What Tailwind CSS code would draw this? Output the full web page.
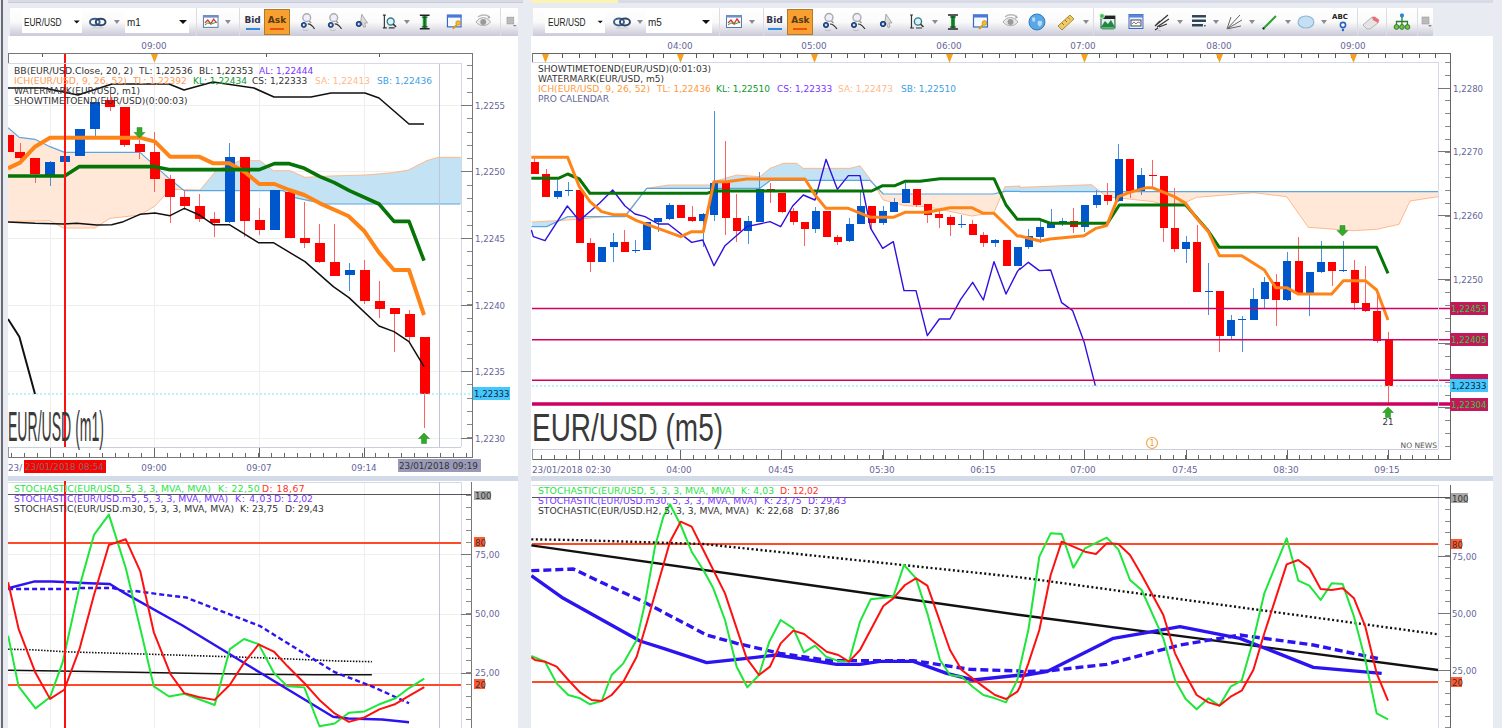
<!DOCTYPE html>
<html lang="en">
<head>
<meta charset="UTF-8">
<title>EUR/USD charts</title>
<script src="https://cdn.jsdelivr.net/npm/@tailwindcss/browser@4"></script>
</head>
<body class="bg-[#e9ebf3]">
<!-- toolbar icons -->
<svg class="hidden">
  <symbol id="i-link" viewBox="0 0 20 20"><ellipse cx="7" cy="10" rx="5" ry="3.4" fill="none" stroke="#3c5f8c" stroke-width="2"/><ellipse cx="13" cy="10" rx="5" ry="3.4" fill="none" stroke="#2c4468" stroke-width="2"/><path d="M4 16h12" stroke="#ccc" stroke-width="1"/></symbol>
  <symbol id="i-chart" viewBox="0 0 20 20"><rect x="2.5" y="3.5" width="15" height="12" fill="#fff" stroke="#5577aa"/><rect x="2" y="3" width="16" height="2.5" fill="#6f8fc6"/><path d="M4 11l3-3 3 4 3-5 3 4" fill="none" stroke="#e03030" stroke-width="1.3"/><path d="M4 13l3-2 4 1 5-2" fill="none" stroke="#2e9e35" stroke-width="1"/><path d="M4 18h12" stroke="#ddd"/></symbol>
  <symbol id="i-zoomin" viewBox="0 0 20 20"><circle cx="9" cy="5.5" r="4" fill="#eef" stroke="#aaa" stroke-width="1.4"/><path d="M11.5 9l2 2" stroke="#999" stroke-width="1.6"/><circle cx="6" cy="13" r="2.6" fill="#2a62c8" stroke="#123" stroke-width=".8"/><circle cx="6" cy="13" r="1" fill="#fff"/><path d="M10 12c3 0 5 2 7 5" fill="none" stroke="#333" stroke-width="1.2"/><path d="M5 18c2 1 4 1 6 0" stroke="#bbb" fill="none"/></symbol>
  <symbol id="i-cursor" viewBox="0 0 20 20"><path d="M10 2l6 9-3 0 1 4-2 .5-1.500-4-2 2z" fill="#ddd" stroke="#999" stroke-width=".8"/><circle cx="7" cy="12" r="2.700" fill="#2a62c8" stroke="#123" stroke-width=".8"/><circle cx="7" cy="12" r="1" fill="#fff"/></symbol>
  <symbol id="i-zoomrect" viewBox="0 0 20 20"><path d="M3 3h3M4.500 3v13M3 16h4M9 16h6" stroke="#333" stroke-width="1.200" fill="none"/><circle cx="11" cy="9.500" r="3.600" fill="#dff1f5" stroke="#2f7f8f" stroke-width="1.400"/><path d="M13.500 12l3 3" stroke="#333" stroke-width="1.600"/></symbol>
  <symbol id="i-height" viewBox="0 0 20 20"><path d="M5 3h10M5 17h10" stroke="#222" stroke-width="1.600"/><rect x="8" y="4" width="4" height="12" fill="#1f9b3c"/><path d="M10 4v12" stroke="#0a5a1e"/><path d="M7 5h6M7 15h6" stroke="#0a4a18"/></symbol>
  <symbol id="i-winkey" viewBox="0 0 20 20"><rect x="2.500" y="3" width="14" height="12" fill="#f6f9ff" stroke="#3a66c8" stroke-width="1.200"/><rect x="2" y="2.500" width="15" height="3" fill="#4878d8"/><circle cx="13.500" cy="11" r="2.400" fill="#f4c020" stroke="#b08010" stroke-width=".6"/><path d="M12 13l-4 4" stroke="#d8a010" stroke-width="2"/></symbol>
  <symbol id="i-eye" viewBox="0 0 20 20"><path d="M2 10c4-6 11-6 15 0-4 5-11 5-15 0z" fill="#e8e8e8" stroke="#aaa"/><circle cx="9.500" cy="10" r="3" fill="#9a9a9a"/><path d="M4 5c3-3 9-3 12 0" stroke="#bbb" stroke-width="1.400" fill="none"/><path d="M15 3l2 3-3 .5z" fill="#aaa"/></symbol>
  <symbol id="i-globe" viewBox="0 0 20 20"><circle cx="10" cy="10" r="8" fill="#58a8e8" stroke="#2e78c0"/><path d="M5 6c3-2 4 1 3 3s-3 1-3-3zM11 9c3-1 5 0 4 3s-3 3-4 1 0-3 0-4z" fill="#b9dcf0"/></symbol>
  <symbol id="i-ruler" viewBox="0 0 20 20"><path d="M2 14L14 3l4 4L6 18z" fill="#edcb6a" stroke="#b08a2a"/><path d="M6 11l2 2M9 8l2 2M12 5.500l2 2" stroke="#94701f"/></symbol>
  <symbol id="i-image" viewBox="0 0 20 20"><rect x="3" y="4" width="14" height="12" fill="#dff0f8" stroke="#1a5a30"/><rect x="3" y="4" width="14" height="3" fill="#222"/><path d="M3 15l4-6 3 3 3-4 4 7z" fill="#1f8a3a"/><circle cx="4" cy="4" r="2.500" fill="#3cc050" stroke="#fff" stroke-width=".8"/><path d="M4 17h12" stroke="#2f9f50"/></symbol>
  <symbol id="i-picwin" viewBox="0 0 20 20"><rect x="3" y="2.500" width="14" height="14" fill="#eaf1fb" stroke="#3a66c8"/><rect x="3" y="2.500" width="14" height="3" fill="#5a86d8"/><rect x="5" y="8" width="10" height="6" fill="#fff" stroke="#445"/><path d="M6 12l2-2 2 2 2-2 2 1" stroke="#555" fill="none" stroke-width=".8"/></symbol>
  <symbol id="i-fork" viewBox="0 0 20 20"><path d="M3 14L16 3M5 15L17 7M7 15l8-3M3 14l5-5M6 16l-3 2" stroke="#333" stroke-width="1.200" fill="none"/><path d="M6 18l3 1" stroke="#bbb"/></symbol>
  <symbol id="i-lines" viewBox="0 0 20 20"><rect x="3" y="3" width="14" height="2.500" fill="#2e4558"/><rect x="3" y="7.500" width="14" height="2.500" fill="#2e4558"/><rect x="3" y="12" width="11" height="2.500" fill="#2e4558"/><path d="M15 13l2 0-1 2z" fill="#2e4558"/></symbol>
  <symbol id="i-fan" viewBox="0 0 20 20"><path d="M3 17L16 3M3 17L18 8M3 17l14-3M3 17l4-12" stroke="#666" stroke-width="1" fill="none"/><path d="M3 17l5 2" stroke="#ccc"/></symbol>
  <symbol id="i-line" viewBox="0 0 20 20"><path d="M3 17L16 4" stroke="#2f9e36" stroke-width="2"/><path d="M3 17l1-1" stroke="#123" stroke-width="2.400"/></symbol>
  <symbol id="i-ellipse" viewBox="0 0 20 20"><ellipse cx="10" cy="10" rx="8" ry="6" fill="#c5dff3" stroke="#8fb7d8" stroke-width="1.200"/></symbol>
  <symbol id="i-abc" viewBox="0 0 20 20"><text x="10" y="7" text-anchor="middle" class="fill-[#222] text-[7px] font-bold">ABC</text><circle cx="13" cy="13" r="2.600" fill="#fff" stroke="#2a62c8" stroke-width="1.600"/><circle cx="13" cy="18" r="1.200" fill="#2a62c8"/></symbol>
  <symbol id="i-eraser" viewBox="0 0 20 20"><path d="M2 13l9-8 3 0 4 3-1 3-8 6H6z" fill="#e4e4e4" stroke="#b5b5b5"/><path d="M11 5l3 0 4 3-1 3-5-3z" fill="#f56a72"/></symbol>
  <symbol id="i-tree" viewBox="0 0 20 20"><rect x="8" y="1.500" width="4" height="4" rx="1.500" fill="#2a88e0"/><path d="M10 5v4M4.500 13V9.500h11V13M10 9v4" stroke="#2a7d34" stroke-width="1.300" fill="none"/><circle cx="4.500" cy="15" r="2.400" fill="#7cbe3c" stroke="#2a7d34"/><circle cx="10" cy="15" r="2.400" fill="#7cbe3c" stroke="#2a7d34"/><circle cx="15.500" cy="15" r="2.400" fill="#7cbe3c" stroke="#2a7d34"/></symbol>
  <symbol id="i-grip" viewBox="0 0 12 12"><rect x="1" y="1" width="7" height="7" fill="#bbb" stroke="#999" stroke-width=".6"/><path d="M7 9h4l-2 2z" fill="#888"/></symbol>
  <symbol id="i-drop" viewBox="0 0 8 8"><path d="M1 2h6L4 6z" fill="#8a8a96"/></symbol>
  <symbol id="i-combo" viewBox="0 0 10 8"><path d="M1 2h8L5 6z" fill="#111"/></symbol>
</svg>

<div class="relative flex w-[1502px] h-[728px] overflow-hidden bg-[#e9ebf3] font-['DejaVu_Sans',sans-serif]">
  <div class="w-[2px] h-full bg-[#6a6a72] ml-[1px]"></div>

  <!-- left pane -->
  <div class="flex flex-col w-[515px] ml-[5px]">
    <div class="h-[3px] w-full bg-[#d8dbe6] border-b border-[#c9ccd8]"></div>
    <div class="h-[5px]"></div>
    <div class="flex h-[28px] w-[508px] ml-[2px] items-center bg-gradient-to-b from-[#ffffff] via-[#fafafa] to-[#c9c9d8] text-[10px] text-[#222]">
      <div class="w-[12px]"></div>
      <div class="flex items-center w-[60px] h-[22px] bg-white pl-[2px]"><span class="inline-block origin-left scale-x-[0.76] text-[11px] font-['Liberation_Sans',sans-serif]">EUR/USD</span><svg class="w-[10px] h-[8px] ml-auto mr-[1px]"><use href="#i-combo"/></svg></div>
      <svg class="w-[20px] h-[20px] ml-[6px] mr-[6px]"><use href="#i-link"/></svg>
      <svg class="w-[8px] h-[8px] mr-[2px]"><use href="#i-drop"/></svg>
      <div class="flex items-center w-[66px] h-[22px] bg-white ml-[2px] pl-[2px]"><span class="inline-block origin-left scale-x-[0.9] text-[11px] font-['Liberation_Sans',sans-serif]">m1</span><svg class="w-[10px] h-[8px] ml-auto mr-[1px]"><use href="#i-combo"/></svg></div>
      <div class="w-[8px] h-full border-r border-[#dcdce4]"></div>
      <svg class="w-[20px] h-[20px] mx-[4px]"><use href="#i-chart"/></svg>
      <svg class="w-[8px] h-[8px]"><use href="#i-drop"/></svg>
      <div class="w-[8px] h-full border-r border-[#dcdce4]"></div>
      <div class="flex flex-col items-center w-[20px] ml-[3px] text-[9px] font-semibold text-[#33334a]">Bid<div class="w-[14px] h-[2px] bg-[#2f8be0]"></div></div>
      <div class="flex flex-col items-center justify-center w-[26px] h-[26px] ml-[2px] bg-[#f8a030] border border-[#b07a28] text-[9px] font-semibold text-[#5a3a10]">Ask<div class="w-[14px] h-[2px] bg-[#e8540f]"></div></div>
      <div class="w-[4px]"></div>
      <svg class="w-[20px] h-[20px] mx-[4px]"><use href="#i-zoomin"/></svg>
      <svg class="w-[20px] h-[20px] mx-[4px]"><use href="#i-zoomin"/></svg>
      <svg class="w-[20px] h-[20px] mx-[4px]"><use href="#i-cursor"/></svg>
      <svg class="w-[20px] h-[20px] mx-[4px]"><use href="#i-zoomrect"/></svg>
      <svg class="w-[8px] h-[8px]"><use href="#i-drop"/></svg>
      <svg class="w-[20px] h-[20px] mx-[4px]"><use href="#i-height"/></svg>
      <svg class="w-[20px] h-[20px] ml-[6px] mr-[4px]"><use href="#i-winkey"/></svg>
      <svg class="w-[20px] h-[20px] ml-[6px] mr-[4px]"><use href="#i-eye"/></svg>
      <div class="w-[4px] h-full border-r border-[#dcdce4]"></div>
      <svg class="w-[12px] h-[12px] ml-[5px]"><use href="#i-grip"/></svg>
    </div>

    <div class="h-[440px] w-[510px] bg-white">
      <svg viewBox="8 36 510 440" class="w-[510px] h-[440px] text-[9px]">
        <g id="lt-marks"></g>
        <text x="154" y="49" text-anchor="middle" class="fill-[#666699] text-[8.8px]">09:00</text>
        <g class="fill-[#333]"><text x="14" y="74" textLength="119" lengthAdjust="spacingAndGlyphs">BB(EUR/USD.Close, 20, 2)</text><text x="139" y="74">TL: 1,22536</text><text x="199" y="74">BL: 1,22353</text></g>
        <text x="259" y="74" class="fill-[#7a33ff]">AL: 1,22444</text>
        <g class="fill-[#ff9a55]"><text x="14" y="84" textLength="113" lengthAdjust="spacingAndGlyphs">ICH(EUR/USD, 9, 26, 52)</text><text x="133" y="84">TL: 1,22392</text></g>
        <text x="193" y="84" class="fill-[#0a9a2a]">KL: 1,22434</text>
        <text x="252" y="84" class="fill-[#333]">CS: 1,22333</text>
        <text x="315" y="84" class="fill-[#ffb98a]">SA: 1,22413</text>
        <text x="377" y="84" class="fill-[#3ca0e6]">SB: 1,22436</text>
        <text x="14" y="94" textLength="126" lengthAdjust="spacingAndGlyphs" class="fill-[#333]">WATERMARK(EUR/USD, m1)</text>
        <text x="14" y="104" textLength="173.500" lengthAdjust="spacingAndGlyphs" class="fill-[#333]">SHOWTIMETOEND(EUR/USD)(0:00:03)</text>
        <text x="8" y="441" textLength="96" lengthAdjust="spacingAndGlyphs" class="fill-[#3a3a3a] text-[42px] font-['Liberation_Sans',sans-serif]">EUR/USD (m1)</text>
        <g class="fill-[#666699] text-[8.6px]">
          <text x="475" y="109">1,2255</text><text x="475" y="175">1,2250</text><text x="475" y="242">1,2245</text><text x="475" y="309">1,2240</text><text x="475" y="375">1,2235</text><text x="475" y="442">1,2230</text>
        </g>
        <rect x="473" y="387" width="37" height="13" fill="#40c8ff"/>
        <text x="474" y="397" class="fill-[#223] text-[8.6px]">1,22333</text>
        <g class="text-[8.8px]">
          <text x="8" y="471" class="fill-[#666699]">23/</text>
          <rect x="24" y="460" width="82" height="13" fill="#ff0000"/>
          <text x="25" y="470" class="fill-[#707070]">23/01/2018 08:54</text>
          <text x="154" y="471" text-anchor="middle" class="fill-[#666699]">09:00</text>
          <text x="259" y="471" text-anchor="middle" class="fill-[#666699]">09:07</text>
          <text x="364" y="471" text-anchor="middle" class="fill-[#666699]">09:14</text>
          <rect x="398" y="459" width="83" height="13" fill="#9a9ab8"/>
          <text x="399" y="469" class="fill-[#333]">23/01/2018 09:19</text>
        </g>
      </svg>
    </div>
    <div class="h-[5px] w-[510px] bg-[#d3dbe8]"></div>
    <div class="flex-1 w-[510px] bg-white">
      <svg viewBox="8 481 510 247" class="w-[510px] h-[247px] text-[9.2px]">
        <g id="lb-marks"></g>
        <text x="14" y="492" textLength="197" lengthAdjust="spacingAndGlyphs" class="fill-[#1fe53f]">STOCHASTIC(EUR/USD, 5, 3, 3, MVA, MVA)</text>
        <text x="218" y="492" textLength="41.600" class="fill-[#1fe53f]">K: 22,50</text>
        <text x="262" y="492" textLength="42.600" class="fill-[#ff3020]">D: 18,67</text>
        <g class="fill-[#7a33ff]"><text x="14" y="502" textLength="214" lengthAdjust="spacingAndGlyphs">STOCHASTIC(EUR/USD.m5, 5, 3, 3, MVA, MVA)</text><text x="235" y="502" textLength="36.800">K: 4,03</text><text x="274" y="502" textLength="38.900">D: 12,02</text></g>
        <g class="fill-[#333]"><text x="14" y="512" textLength="220" lengthAdjust="spacingAndGlyphs">STOCHASTIC(EUR/USD.m30, 5, 3, 3, MVA, MVA)</text><text x="240" y="512" textLength="38.200">K: 23,75</text><text x="285" y="512" textLength="38.900">D: 29,43</text></g>
        <g class="text-[8.6px]">
          <rect x="474" y="491" width="17" height="9" fill="#a8a8a8"/><text x="475" y="499" class="fill-[#333]">100</text>
          <rect x="474" y="537" width="11" height="10" fill="#ff5a30"/><text x="475" y="546" class="fill-[#333]">80</text>
          <rect x="474" y="679" width="11" height="10" fill="#ff5a30"/><text x="475" y="688" class="fill-[#333]">20</text>
          <g class="fill-[#666699]"><text x="475" y="558">75,00</text><text x="475" y="617">50,00</text><text x="475" y="676">25,00</text></g>
        </g>
      </svg>
    </div>
  </div>

  <div class="w-[5px]"></div>

  <!-- right pane -->
  <div class="flex flex-col w-[962px] ml-[3px]">
    <div class="flex h-[3px]"><div class="w-[87px] bg-[#fbf3b4]"></div><div class="flex-1 bg-[#d8dbe6]"></div></div>
    <div class="h-[5px]"></div>
    <div class="flex h-[28px] w-[900px] ml-[2px] items-center bg-gradient-to-b from-[#ffffff] via-[#fafafa] to-[#c9c9d8] text-[10px] text-[#222]">
      <div class="w-[12px]"></div>
      <div class="flex items-center w-[60px] h-[22px] bg-white pl-[3px]"><span class="inline-block origin-left scale-x-[0.76] text-[11px] font-['Liberation_Sans',sans-serif]">EUR/USD</span><svg class="w-[10px] h-[8px] ml-auto mr-[1px]"><use href="#i-combo"/></svg></div>
      <svg class="w-[20px] h-[20px] ml-[7px] mr-[4px]"><use href="#i-link"/></svg>
      <svg class="w-[8px] h-[8px] mr-[2px]"><use href="#i-drop"/></svg>
      <div class="flex items-center w-[66px] h-[22px] bg-white pl-[2px]"><span class="inline-block origin-left scale-x-[0.9] text-[11px] font-['Liberation_Sans',sans-serif]">m5</span><svg class="w-[10px] h-[8px] ml-auto mr-[1px]"><use href="#i-combo"/></svg></div>
      <div class="w-[8px] h-full border-r border-[#dcdce4]"></div>
      <svg class="w-[20px] h-[20px] mx-[4px]"><use href="#i-chart"/></svg>
      <svg class="w-[8px] h-[8px]"><use href="#i-drop"/></svg>
      <div class="w-[8px] h-full border-r border-[#dcdce4]"></div>
      <div class="flex flex-col items-center w-[20px] ml-[1px] text-[9px] font-semibold text-[#33334a]">Bid<div class="w-[14px] h-[2px] bg-[#2f8be0]"></div></div>
      <div class="flex flex-col items-center justify-center w-[26px] h-[26px] ml-[3px] bg-[#f8a030] border border-[#b07a28] text-[9px] font-semibold text-[#5a3a10]">Ask<div class="w-[14px] h-[2px] bg-[#e8540f]"></div></div>
      <div class="w-[3px]"></div>
      <svg class="w-[20px] h-[20px] mx-[4px]"><use href="#i-zoomin"/></svg>
      <svg class="w-[20px] h-[20px] mx-[4px]"><use href="#i-zoomin"/></svg>
      <svg class="w-[20px] h-[20px] mx-[4px]"><use href="#i-cursor"/></svg>
      <svg class="w-[20px] h-[20px] ml-[7px] mr-[4px]"><use href="#i-zoomrect"/></svg>
      <svg class="w-[8px] h-[8px]"><use href="#i-drop"/></svg>
      <svg class="w-[20px] h-[20px] mx-[4px]"><use href="#i-height"/></svg>
      <svg class="w-[20px] h-[20px] mx-[4px]"><use href="#i-winkey"/></svg>
      <svg class="w-[20px] h-[20px] ml-[6px] mr-[4px]"><use href="#i-eye"/></svg>
      <svg class="w-[20px] h-[20px] ml-[2px] mr-[5px]"><use href="#i-globe"/></svg>
      <svg class="w-[20px] h-[20px] mx-[4px]"><use href="#i-ruler"/></svg>
      <svg class="w-[8px] h-[8px] ml-[2px]"><use href="#i-drop"/></svg>
      <div class="w-[4px] h-full border-r border-[#dcdce4]"></div>
      <svg class="w-[20px] h-[20px] mx-[4px]"><use href="#i-image"/></svg>
      <svg class="w-[20px] h-[20px] mx-[4px]"><use href="#i-picwin"/></svg>
      <svg class="w-[20px] h-[20px] ml-[2px] mr-[4px]"><use href="#i-fork"/></svg>
      <svg class="w-[8px] h-[8px]"><use href="#i-drop"/></svg>
      <svg class="w-[20px] h-[20px] ml-[5px] mr-[4px]"><use href="#i-lines"/></svg>
      <svg class="w-[8px] h-[8px]"><use href="#i-drop"/></svg>
      <svg class="w-[20px] h-[20px] mx-[4px]"><use href="#i-fan"/></svg>
      <svg class="w-[8px] h-[8px]"><use href="#i-drop"/></svg>
      <svg class="w-[20px] h-[20px] mx-[4px]"><use href="#i-line"/></svg>
      <svg class="w-[8px] h-[8px]"><use href="#i-drop"/></svg>
      <svg class="w-[20px] h-[20px] mx-[4px]"><use href="#i-ellipse"/></svg>
      <svg class="w-[8px] h-[8px]"><use href="#i-drop"/></svg>
      <svg class="w-[20px] h-[20px] ml-[2px] mr-[4px]"><use href="#i-abc"/></svg>
      <div class="w-[4px] h-full border-r border-[#dcdce4]"></div>
      <svg class="w-[20px] h-[20px] ml-[3px] mr-[4px]"><use href="#i-eraser"/></svg>
      <div class="w-[2px] h-full border-r border-[#dcdce4]"></div>
      <svg class="w-[20px] h-[20px] ml-[5px] mr-[4px]"><use href="#i-tree"/></svg>
      <div class="w-[2px] h-full border-r border-[#dcdce4]"></div>
      <svg class="w-[12px] h-[12px] ml-[3px]"><use href="#i-grip"/></svg>
    </div>

    <div class="h-[440px] bg-white">
      <svg viewBox="531 36 962 440" class="w-[962px] h-[440px] text-[9px]">
        <g id="rt-marks"></g>
        <g class="fill-[#666699] text-[8.8px]" text-anchor="middle">
          <text x="680" y="49">04:00</text><text x="814" y="49">05:00</text><text x="949" y="49">06:00</text><text x="1083" y="49">07:00</text><text x="1219" y="49">08:00</text><text x="1353" y="49">09:00</text>
        </g>
        <text x="538" y="72" textLength="173" lengthAdjust="spacingAndGlyphs" class="fill-[#333]">SHOWTIMETOEND(EUR/USD)(0:01:03)</text>
        <text x="538" y="82" textLength="126" lengthAdjust="spacingAndGlyphs" class="fill-[#333]">WATERMARK(EUR/USD, m5)</text>
        <g class="fill-[#ff9a3a]"><text x="538" y="92" textLength="112" lengthAdjust="spacingAndGlyphs">ICH(EUR/USD, 9, 26, 52)</text><text x="657" y="92">TL: 1,22436</text></g>
        <text x="716" y="92" class="fill-[#0a9a2a]">KL: 1,22510</text>
        <text x="777" y="92" class="fill-[#7a33ff]">CS: 1,22333</text>
        <text x="838" y="92" class="fill-[#ffb98a]">SA: 1,22473</text>
        <text x="901" y="92" class="fill-[#3ca0e6]">SB: 1,22510</text>
        <text x="538" y="102" textLength="71" lengthAdjust="spacingAndGlyphs" class="fill-[#666699]">PRO CALENDAR</text>
        <text x="532" y="441" textLength="191" lengthAdjust="spacingAndGlyphs" class="fill-[#3a3a3a] text-[39px] font-['Liberation_Sans',sans-serif]">EUR/USD (m5)</text>
        <g class="fill-[#666699] text-[8.6px]"><text x="1453" y="92">1,2280</text><text x="1453" y="155">1,2270</text><text x="1453" y="219">1,2260</text><text x="1453" y="283">1,2250</text></g>
        <g class="text-[8.6px]">
          <rect x="1450" y="302" width="38" height="13" fill="#c4175c"/><text x="1451" y="312" class="fill-[#22d040]">1,22453</text>
          <rect x="1450" y="333" width="38" height="13" fill="#c4175c"/><text x="1451" y="343" class="fill-[#22d040]">1,22405</text>
          <rect x="1450" y="374" width="38" height="6" fill="#c4175c"/>
          <rect x="1450" y="379" width="38" height="13" fill="#40c8ff"/><text x="1451" y="389" class="fill-[#223]">1,22333</text>
          <rect x="1450" y="398" width="38" height="13" fill="#c4175c"/><text x="1451" y="408" class="fill-[#22d040]">1,22304</text>
        </g>
        <text x="1388" y="425" text-anchor="middle" class="fill-[#333] text-[8.6px]">21</text>
        <circle cx="1152" cy="443" r="5.500" fill="none" stroke="#f5a64a" stroke-width="1.200"/>
        <text x="1152" y="446" text-anchor="middle" class="fill-[#f59a3a] text-[8px]">1</text>
        <text x="1437" y="448" text-anchor="end" class="fill-[#555] text-[7.5px]">NO NEWS</text>
        <g class="fill-[#666699] text-[8.8px]">
          <text x="532" y="473">23/01/2018 02:30</text>
          <g text-anchor="middle"><text x="679" y="473">04:00</text><text x="781" y="473">04:45</text><text x="882" y="473">05:30</text><text x="983" y="473">06:15</text><text x="1083" y="473">07:00</text><text x="1185" y="473">07:45</text><text x="1286" y="473">08:30</text><text x="1387" y="473">09:15</text></g>
        </g>
      </svg>
    </div>
    <div class="h-[5px] w-[962px] bg-[#d3dbe8]"></div>
    <div class="flex-1 bg-white">
      <svg viewBox="531 481 962 247" class="w-[962px] h-[247px] text-[9.2px]">
        <g id="rb-marks"></g>
        <text x="538" y="494" textLength="197" lengthAdjust="spacingAndGlyphs" class="fill-[#1fe53f]">STOCHASTIC(EUR/USD, 5, 3, 3, MVA, MVA)</text>
        <text x="741" y="494" textLength="33" class="fill-[#1fe53f]">K: 4,03</text>
        <text x="780" y="494" textLength="38.700" class="fill-[#ff3020]">D: 12,02</text>
        <g class="fill-[#7a33ff]"><text x="538" y="504" textLength="219" lengthAdjust="spacingAndGlyphs">STOCHASTIC(EUR/USD.m30, 5, 3, 3, MVA, MVA)</text><text x="764" y="504" textLength="37.700">K: 23,75</text><text x="808" y="504" textLength="38.300">D: 29,43</text></g>
        <g class="fill-[#333]"><text x="538" y="514" textLength="211" lengthAdjust="spacingAndGlyphs">STOCHASTIC(EUR/USD.H2, 5, 3, 3, MVA, MVA)</text><text x="756" y="514" textLength="37.300">K: 22,68</text><text x="801" y="514" textLength="38.300">D: 37,86</text></g>
        <g class="text-[8.6px]">
          <rect x="1451" y="493" width="17" height="10" fill="#a8a8a8"/><text x="1452" y="502" class="fill-[#333]">100</text>
          <rect x="1451" y="539" width="11" height="10" fill="#ff5a30"/><text x="1452" y="548" class="fill-[#333]">80</text>
          <rect x="1451" y="677" width="11" height="10" fill="#ff5a30"/><text x="1452" y="686" class="fill-[#333]">20</text>
          <g class="fill-[#666699]"><text x="1452" y="560">75,00</text><text x="1452" y="617">50,00</text><text x="1452" y="674">25,00</text></g>
        </g>
      </svg>
    </div>
  </div>
</div>

<script>
const NS = 'http://www.w3.org/2000/svg';
const RED = '#ff0000', BLUE = '#0057cc', WICK_R = '#ff6060', WICK_B = '#4a8ee0';
const ORANGE = '#ff8418', GREEN = '#067406', STO_RED = '#ff4a2a';

function el(g, tag, attrs) {
  const n = document.createElementNS(NS, tag);
  for (const k in attrs) n.setAttribute(k, attrs[k]);
  g.appendChild(n);
  return n;
}
// the point lists were read off 3x crops, k/ox/oy bring them back to page px
function P(arr, ox, oy, k = 3) {
  const out = [];
  for (let i = 0; i < arr.length; i += 2) out.push([ox + arr[i] / k, oy + arr[i + 1] / k]);
  return out;
}
function line(g, pts, color, w, dash) {
  const a = {points: pts.map(p => p.join(',')).join(' '), fill: 'none', stroke: color, 'stroke-width': w, 'stroke-linejoin': 'round'};
  if (dash) a['stroke-dasharray'] = dash;
  el(g, 'polyline', a);
}
function rect(g, x, y, w, h, fill) {
  el(g, 'rect', {x, y, width: w, height: h, fill, 'shape-rendering': 'crispEdges'});
}
function seg(g, x1, y1, x2, y2, color, w = 1) {
  el(g, 'line', {x1, y1, x2, y2, stroke: color, 'stroke-width': w, 'shape-rendering': 'crispEdges'});
}
// [cx, wickTop, wickBottom, bodyTop, bodyBottom, 'r'|'b']
function candles(g, list, ox, oy, bw) {
  for (const [cx, wt, wb, bt, bb, c] of list) {
    const x = ox + cx / 3;
    seg(g, Math.round(x) + .5, oy + wt / 3, Math.round(x) + .5, oy + wb / 3, c === 'r' ? WICK_R : WICK_B);
    rect(g, Math.round(x - bw / 2) , oy + bt / 3, bw + 1, Math.max((bb - bt) / 3, 1), c === 'r' ? RED : BLUE);
  }
}
function at(pts, x) {
  for (let i = 1; i < pts.length; i++) {
    if (x <= pts[i][0]) {
      const [x0, y0] = pts[i - 1], [x1, y1] = pts[i];
      return y0 + (y1 - y0) * (x - x0) / ((x1 - x0) || 1);
    }
  }
  return pts[pts.length - 1][1];
}
function cloud(g, sa, sb, x0, x1) {
  let up = '', down = '';
  for (let x = x0; x < x1; x++) {
    const a = at(sa, x + .5), b = at(sb, x + .5);
    const s = `M${x} ${Math.min(a, b)}V${Math.max(a, b)}H${x + 1}V${Math.min(a, b)}Z`;
    if (a < b) up += s; else down += s;
  }
  el(g, 'path', {d: up, fill: '#c3e2f3', 'shape-rendering': 'crispEdges'});
  el(g, 'path', {d: down, fill: '#ffe8d8', 'shape-rendering': 'crispEdges'});
}
function arrow(g, x, y, dir) {
  const d = dir === 'up'
    ? `M${x} ${y - 5}l5.500 5.500h-3v5h-5v-5h-3z`
    : `M${x} ${y + 5}l5.500 -5.500h-3v-5h-5v5h-3z`;
  el(g, 'path', {d, fill: '#35a82a', stroke: '#1f8a1f', 'stroke-width': .5});
}
function triangle(g, x, y) {
  el(g, 'path', {d: `M${x - 3.500} ${y}h7l-3.500 9z`, fill: '#f5a020'});
}

/* ---------- top left, m1 ---------- */
(function () {
  const g = document.getElementById('lt-marks');
  for (const x of [50, 154, 259, 364]) seg(g, x + .5, 63, x + .5, 447, '#eeeeee');
  for (const y of [105, 171, 238, 305, 371, 438]) seg(g, 8, y + .5, 461, y + .5, '#eeeeee');

  const sb = P([24, 83, 58, 112, 105, 118, 150, 140, 194, 157, 420, 157, 510, 238, 553, 272, 850, 272, 880, 292, 975, 312, 1381, 312], 0, 100);
  const sa = P([24, 365, 150, 362, 190, 384, 285, 384, 330, 355, 420, 345, 465, 318, 510, 268, 600, 270, 650, 210, 720, 182, 780, 182, 820, 212, 870, 212, 915, 232, 990, 228, 1095, 225, 1180, 218, 1225, 210, 1280, 182, 1315, 172, 1381, 172], 0, 100);
  cloud(g, sa, sb, 8, 461);
  line(g, sa, '#ffb98a', 1);
  line(g, sb, '#5aa6e0', 1.2);

  candles(g, [
    [24, 105, 155, 105, 155, 'r'], [59, 130, 190, 155, 175, 'r'], [104, 175, 248, 175, 222, 'r'], [149, 182, 258, 186, 225, 'b'],
    [194, 167, 187, 167, 187, 'b'], [239, 88, 168, 88, 168, 'b'], [284, 5, 108, 5, 88, 'b'], [329, -18, 33, 0, 20, 'r'],
    [373, 20, 140, 20, 135, 'r'], [418, 120, 178, 133, 157, 'r'], [463, 97, 275, 155, 238, 'r'], [509, 225, 370, 238, 292, 'r'],
    [553, 270, 330, 292, 318, 'r'], [598, 283, 365, 317, 358, 'r'], [643, 335, 410, 357, 368, 'r'], [688, 130, 368, 170, 367, 'b'],
    [733, 170, 412, 170, 362, 'r'], [778, 325, 405, 361, 390, 'r'], [823, 270, 390, 270, 390, 'b'], [868, 275, 413, 275, 413, 'r'],
    [913, 305, 445, 413, 430, 'r'], [958, 372, 488, 430, 487, 'r'], [1003, 372, 527, 485, 527, 'r'], [1048, 488, 573, 509, 526, 'b'],
    [1093, 480, 612, 509, 604, 'r'], [1137, 543, 653, 603, 627, 'r'], [1182, 625, 755, 625, 643, 'r'], [1227, 630, 725, 643, 710, 'r'],
    [1272, 710, 983, 710, 882, 'r']
  ], 0, 100, 9);

  line(g, [[8, 88], [44, 88], [78, 95], [112, 84], [169, 84], [184, 90], [213, 82], [254, 88], [274, 97], [311, 97], [331, 93], [365, 93], [379, 98], [409, 124], [424, 124]], '#111', 1.6);
  line(g, P([24, 366, 105, 370, 190, 372, 230, 370, 290, 375, 335, 374, 370, 365, 420, 343, 465, 339, 510, 347, 553, 325, 598, 345, 640, 374, 688, 374, 775, 428, 820, 428, 915, 485, 1000, 560, 1047, 593, 1137, 678, 1182, 695, 1227, 725, 1272, 800], 0, 100), '#111', 1.5);
  line(g, P([24, 657, 58, 710, 105, 882], 0, 100), '#111', 2);
  line(g, P([24, 205, 60, 188, 105, 140, 150, 113, 420, 113, 465, 125, 510, 170, 597, 170, 640, 190, 688, 190, 733, 215, 778, 252, 823, 252, 868, 270, 913, 285, 960, 310, 1045, 348, 1092, 392, 1137, 458, 1182, 510, 1227, 510, 1272, 645], 0, 100), ORANGE, 4);
  line(g, P([24, 228, 194, 228, 237, 200, 465, 200, 510, 209, 778, 209, 823, 191, 868, 191, 913, 205, 960, 230, 1003, 248, 1048, 272, 1137, 312, 1182, 364, 1227, 364, 1272, 482], 0, 100), GREEN, 3.6);
  arrow(g, 139.500, 133, 'down');
  arrow(g, 424, 438, 'up');

  el(g, 'line', {x1: 8, y1: 394, x2: 473, y2: 394, stroke: '#7fe0f5', 'stroke-width': 1, 'stroke-dasharray': '2 2'});
  seg(g, 439.500, 63, 439.500, 447, '#c0c4d8', 1.5);
  seg(g, 64.500, 53, 64.500, 447, '#ff1010', 2);

  // frame and rulers
  rect(g, 8, 447, 464, 10, '#ffffff');
  seg(g, 8, 63.500, 461, 63.500, '#d4d9e6', 1.5);
  seg(g, 461.500, 63, 461.500, 447, '#d4d9e6', 1.5);
  seg(g, 8, 447.500, 461, 447.500, '#c9cedd', 1.5);
  seg(g, 8, 53.500, 472, 53.500, '#777');
  seg(g, 8.500, 53, 8.500, 63, '#777');
  seg(g, 472.500, 53, 472.500, 458, '#777');
  seg(g, 8, 457.500, 472, 457.500, '#777');
  seg(g, 8.500, 447, 8.500, 458, '#999');
  for (const x of [42, 266, 379]) seg(g, x + .5, 54, x + .5, 57, '#555');
  triangle(g, 154.500, 54);
  for (let x = 11; x < 472; x += 13) seg(g, x + .5, 453, x + .5, 457, '#666');
  for (const x of [50, 154, 259, 364]) seg(g, x + .5, 448, x + .5, 457, '#666');
  for (let y = 65; y < 447; y += 13.3) seg(g, 467, Math.round(y) + .5, 472, Math.round(y) + .5, '#888');
  for (const y of [105, 171, 238, 305, 371, 438]) seg(g, 461, y + .5, 472, y + .5, '#777');
})();

/* ---------- bottom left, stochastics ---------- */
(function () {
  const g = document.getElementById('lb-marks');
  const k = 2.958;
  for (const x of [50, 154, 259, 364]) seg(g, x + .5, 483, x + .5, 728, '#eeeeee');
  for (const y of [554, 614, 673]) seg(g, 8, y + .5, 461, y + .5, '#eeeeee');
  seg(g, 8, 482.500, 461, 482.500, '#d4d9e6', 1.5);
  seg(g, 461.500, 482, 461.500, 728, '#d4d9e6', 1.5);
  seg(g, 439.500, 482, 439.500, 728, '#c0c4d8', 1.5);
  seg(g, 8, 494.500, 472, 494.500, '#555');
  seg(g, 8, 542.500, 461, 542.500, STO_RED, 2);
  seg(g, 8, 684.500, 461, 684.500, STO_RED, 2);

  line(g, P([24, 530, 100, 532, 200, 538, 380, 543, 760, 555, 1000, 565, 1100, 567], 0, 470, k), '#111', 1.6, '1.5 1.5');
  line(g, P([24, 592, 270, 596, 600, 602, 935, 606, 1100, 606], 0, 470, k), '#111', 1.5);
  line(g, P([24, 352, 215, 352, 240, 349, 335, 349, 370, 360, 400, 358, 490, 370, 550, 377, 630, 408, 770, 462, 850, 512, 990, 598, 1100, 640, 1210, 690], 0, 470, k), '#2c14f0', 2.400, '5 3');
  line(g, P([24, 350, 100, 330, 155, 330, 265, 335, 325, 337, 370, 365, 540, 460, 680, 545, 770, 600, 985, 730, 1030, 735, 1130, 738, 1210, 746], 0, 470, k), '#2c14f0', 2.400);
  line(g, P([24, 490, 55, 640, 105, 705, 148, 672, 185, 570, 235, 345, 278, 192, 322, 132, 372, 290, 420, 490, 455, 640, 500, 670, 545, 662, 635, 695, 680, 530, 722, 500, 765, 515, 810, 600, 850, 640, 900, 643, 945, 758, 990, 750, 1032, 718, 1078, 714, 1122, 693, 1170, 675, 1210, 645, 1255, 617], 0, 470, k), '#1ee63a', 2);
  line(g, P([24, 332, 55, 470, 105, 600, 148, 677, 190, 650, 235, 530, 278, 370, 322, 222, 372, 205, 415, 300, 455, 480, 505, 605, 545, 660, 590, 672, 635, 680, 680, 635, 722, 570, 765, 516, 810, 537, 850, 580, 900, 630, 945, 680, 990, 720, 1032, 745, 1078, 732, 1122, 708, 1170, 692, 1210, 668, 1255, 642], 0, 470, k), '#ff1010', 2);
  seg(g, 64.500, 481, 64.500, 728, '#ff1010', 2);

  seg(g, 471.500, 482, 471.500, 728, '#777');
  for (let y = 495; y < 728; y += 11.8) seg(g, 466, Math.round(y) + .5, 472, Math.round(y) + .5, '#888');
  for (const y of [554, 614, 673]) seg(g, 461, y + .5, 472, y + .5, '#777');
})();

/* ---------- top right, m5 ---------- */
(function () {
  const g = document.getElementById('rt-marks');
  const sb = P([4, 380, 50, 380, 113, 350, 285, 350, 350, 265, 540, 265, 690, 265, 722, 241, 1020, 241, 1060, 282, 1390, 282, 1425, 274, 1470, 274], 530, 100)
    .concat(P([0, 275, 1254, 275], 1020, 100));
  const sa = P([4, 366, 113, 360, 285, 345, 350, 265, 415, 255, 540, 255, 550, 245, 620, 225, 690, 230, 720, 205, 760, 190, 800, 190, 820, 205, 960, 205, 990, 197, 1030, 250, 1060, 300, 1125, 317, 1192, 320, 1325, 348, 1392, 338, 1425, 260, 1470, 258], 530, 100)
    .concat(P([0, 262, 215, 254, 260, 290, 400, 305, 430, 313, 497, 307, 530, 292, 700, 278, 800, 290, 865, 382, 1000, 392, 1070, 388, 1137, 373, 1170, 303, 1254, 290], 1020, 100));
  cloud(g, sa, sb, 532, 1438);
  line(g, sa, '#ffb98a', 1);
  line(g, sb, '#5aa6e0', 1.2);

  candles(g, [
    [13, 175, 222, 185, 222, 'r'], [47, 207, 292, 221, 292, 'r'], [81, 240, 297, 272, 292, 'b'], [114, 245, 288, 270, 273, 'b'],
    [148, 270, 428, 270, 428, 'r'], [181, 415, 515, 428, 486, 'r'], [215, 441, 487, 441, 487, 'b'], [250, 400, 485, 427, 442, 'b'],
    [283, 390, 455, 427, 455, 'r'], [316, 420, 460, 449, 453, 'b'], [350, 365, 450, 365, 449, 'b'], [383, 354, 395, 354, 367, 'b'],
    [417, 310, 360, 315, 356, 'b'], [451, 314, 354, 314, 354, 'r'], [485, 317, 365, 352, 362, 'r'], [518, 340, 440, 343, 362, 'b'],
    [551, 33, 362, 250, 344, 'b'], [585, 124, 405, 250, 355, 'r'], [619, 282, 425, 354, 392, 'r'], [653, 347, 432, 364, 392, 'b'],
    [687, 217, 365, 268, 365, 'b'], [720, 250, 308, 268, 271, 'r'], [755, 279, 340, 279, 335, 'r'], [789, 325, 375, 334, 367, 'r'],
    [822, 365, 437, 367, 388, 'r'], [855, 322, 400, 333, 388, 'b'], [889, 333, 412, 333, 412, 'r'], [922, 405, 435, 410, 425, 'r'],
    [957, 355, 425, 371, 423, 'b'], [990, 270, 372, 317, 372, 'b'], [1024, 317, 390, 317, 368, 'r'], [1058, 318, 375, 333, 368, 'b'],
    [1091, 295, 336, 307, 335, 'b'], [1125, 250, 310, 268, 310, 'b'], [1159, 267, 322, 268, 316, 'r'], [1192, 313, 370, 313, 344, 'r'],
    [1226, 330, 385, 343, 353, 'r'], [1260, 345, 407, 352, 374, 'r'], [1293, 345, 385, 371, 375, 'b'], [1327, 360, 405, 373, 405, 'r'],
    [1360, 397, 442, 404, 430, 'r'], [1394, 418, 440, 421, 428, 'b'], [1428, 420, 498, 420, 498, 'r'], [1461, 440, 498, 440, 498, 'b']
  ], 530, 100, 7);
  candles(g, [
    [24, 388, 447, 408, 440, 'b'], [59, 360, 428, 382, 410, 'b'], [92, 328, 384, 365, 383, 'b'], [126, 355, 378, 364, 370, 'b'],
    [159, 325, 398, 364, 380, 'r'], [193, 315, 395, 315, 381, 'b'], [228, 270, 325, 284, 316, 'b'], [261, 250, 315, 284, 303, 'r'],
    [295, 133, 305, 176, 304, 'b'], [329, 176, 295, 176, 272, 'r'], [362, 205, 285, 226, 272, 'b'], [396, 180, 265, 226, 229, 'r'],
    [430, 228, 425, 228, 385, 'r'], [463, 265, 455, 385, 446, 'r'], [497, 408, 488, 425, 447, 'b'], [530, 375, 575, 425, 575, 'r'],
    [565, 490, 645, 572, 575, 'b'], [598, 572, 755, 572, 708, 'r'], [632, 645, 718, 659, 708, 'b'], [665, 648, 755, 658, 661, 'b'],
    [699, 563, 660, 598, 660, 'b'], [733, 530, 625, 547, 598, 'b'], [767, 522, 677, 547, 601, 'r'], [800, 455, 602, 483, 601, 'b'],
    [834, 412, 578, 483, 578, 'r'], [868, 516, 648, 516, 578, 'b'], [902, 422, 518, 485, 517, 'b'], [935, 485, 557, 485, 514, 'r'],
    [968, 422, 517, 510, 514, 'b'], [1002, 480, 630, 509, 610, 'r'], [1036, 497, 635, 610, 633, 'r'], [1070, 580, 728, 633, 722, 'r'],
    [1104, 696, 915, 718, 857, 'r']
  ], 1020, 100, 7);

  line(g, P([4, 390, 10, 410, 45, 422, 112, 318, 148, 362, 210, 308, 248, 270, 285, 318, 315, 342, 345, 350, 385, 372, 415, 372, 485, 427, 518, 420, 552, 497, 585, 437, 650, 380, 720, 365, 752, 380, 788, 318, 820, 285, 855, 300, 888, 178, 922, 268, 955, 227, 990, 227, 1022, 385, 1058, 445, 1090, 425, 1122, 572, 1158, 572, 1192, 707, 1228, 657, 1260, 657, 1292, 598, 1328, 547, 1360, 600, 1392, 485, 1428, 582, 1462, 515, 1470, 505], 530, 100)
    .concat(P([0, 508, 25, 487, 58, 512, 92, 510, 125, 608, 158, 632, 192, 725, 226, 857], 1020, 100)), '#3010e0', 1.4);
  line(g, P([4, 235, 85, 235, 113, 222, 148, 237, 180, 280, 530, 280, 555, 273, 1025, 273, 1058, 257, 1095, 257, 1125, 244, 1170, 244, 1230, 236, 1392, 236, 1428, 315, 1462, 358], 530, 100)
    .concat(P([0, 358, 59, 358, 92, 370, 262, 370, 298, 315, 497, 315, 565, 393, 598, 442, 1070, 442, 1104, 520], 1020, 100)), GREEN, 3);
  line(g, P([4, 172, 113, 172, 148, 260, 180, 305, 215, 335, 250, 344, 285, 344, 320, 362, 452, 410, 485, 395, 520, 395, 552, 245, 590, 245, 650, 237, 825, 237, 855, 285, 888, 325, 955, 325, 1022, 352, 1090, 352, 1125, 337, 1192, 337, 1260, 323, 1325, 323, 1360, 340, 1392, 340, 1428, 375, 1462, 408], 530, 100)
    .concat(P([0, 408, 60, 423, 90, 417, 192, 407, 228, 385, 260, 377, 295, 290, 329, 277, 380, 263, 396, 263, 463, 290, 497, 310, 530, 355, 565, 395, 598, 467, 665, 467, 733, 510, 767, 563, 800, 563, 834, 582, 935, 582, 970, 542, 1036, 542, 1070, 570, 1104, 660], 1020, 100)), ORANGE, 3);

  for (const y of [308.500, 339.700, 380.300]) el(g, 'line', {x1: 532, y1: y, x2: 1450, y2: y, stroke: '#d4005f', 'stroke-width': 1.5});
  el(g, 'line', {x1: 532, y1: 386, x2: 1450, y2: 386, stroke: '#7fe0f5', 'stroke-width': 1, 'stroke-dasharray': '2 2'});
  el(g, 'line', {x1: 532, y1: 404, x2: 1450, y2: 404, stroke: '#cc0060', 'stroke-width': 3.6});
  arrow(g, 1342.500, 231, 'down');
  arrow(g, 1388, 412, 'up');

  // frame and rulers
  seg(g, 532, 62.500, 1438, 62.500, '#d4d9e6', 1.5);
  seg(g, 1438.500, 62, 1438.500, 449, '#d4d9e6', 1.5);
  seg(g, 532, 449.500, 1438, 449.500, '#c9cedd', 1.5);
  seg(g, 532, 53.500, 1450, 53.500, '#666');
  seg(g, 532.500, 53, 532.500, 62, '#777');
  seg(g, 1450.500, 53, 1450.500, 460, '#666');
  seg(g, 532, 459.500, 1450, 459.500, '#666');
  seg(g, 532.500, 449, 532.500, 460, '#999');
  for (let x = 545; x < 1450; x += 16.800) seg(g, Math.round(x) + .5, 54, Math.round(x) + .5, 58, '#555');
  for (const x of [545, 680, 814, 949, 1084, 1219, 1353]) triangle(g, x + .5, 54);
  for (let x = 541; x < 1450; x += 12.630) seg(g, Math.round(x) + .5, 455, Math.round(x) + .5, 459, '#666');
  for (const x of [579, 680, 781, 883, 983, 1084, 1186, 1287, 1388]) seg(g, x + .5, 450, x + .5, 459, '#666');
  for (let y = 62; y < 449; y += 12.800) seg(g, 1445, Math.round(y) + .5, 1450, Math.round(y) + .5, '#888');
  for (const y of [88, 151, 215, 279, 343, 407]) seg(g, 1438, y + .5, 1450, y + .5, '#777');
})();

/* ---------- bottom right, stochastics ---------- */
(function () {
  const g = document.getElementById('rb-marks');
  seg(g, 532, 485.500, 1438, 485.500, '#d4d9e6', 1.5);
  seg(g, 1438.500, 485, 1438.500, 728, '#d4d9e6', 1.5);
  seg(g, 532, 497.500, 1450, 497.500, '#555');
  seg(g, 532, 544, 1438, 544, STO_RED, 2);
  seg(g, 532, 682, 1438, 682, STO_RED, 2);

  line(g, P([4, 208, 130, 210, 520, 222, 1470, 322], 530, 470).concat(P([0, 322, 1254, 493], 1020, 470)), '#111', 2.400, '2 2.500');
  line(g, P([4, 226, 1470, 435], 530, 470).concat(P([0, 435, 1254, 600], 1020, 470)), '#111', 2.400);
  line(g, P([4, 302, 130, 297, 220, 340, 340, 395, 530, 495, 620, 520, 750, 550, 900, 572, 1150, 572, 1320, 598, 1470, 603], 530, 470)
    .concat(P([0, 605, 80, 603, 260, 583, 480, 525, 660, 495, 880, 525, 1085, 568], 1020, 470)), '#2c14f0', 3.400, '8 4');
  line(g, P([4, 317, 100, 385, 330, 513, 400, 535, 530, 578, 650, 565, 740, 555, 850, 572, 920, 583, 990, 583, 1050, 574, 1150, 574, 1250, 610, 1330, 630, 1470, 615], 530, 470)
    .concat(P([0, 618, 80, 605, 280, 505, 380, 488, 480, 470, 660, 505, 880, 592, 1085, 610], 1020, 470)), '#2c14f0', 3.400);
  line(g, P([4, 558, 45, 575, 80, 640, 115, 675, 150, 685, 180, 703, 215, 693, 245, 615, 280, 580, 320, 510, 345, 400, 375, 230, 400, 140, 420, 103, 452, 165, 485, 245, 520, 300, 550, 355, 585, 450, 620, 590, 652, 652, 687, 615, 718, 515, 752, 450, 790, 475, 822, 547, 855, 527, 888, 560, 922, 572, 957, 575, 990, 455, 1022, 388, 1090, 380, 1122, 285, 1158, 325, 1192, 430, 1230, 570, 1260, 615, 1295, 620, 1328, 650, 1360, 675, 1395, 685, 1428, 697, 1462, 630], 530, 470)
    .concat(P([0, 590, 25, 480, 58, 260, 92, 190, 125, 192, 160, 293, 195, 235, 260, 203, 295, 238, 330, 330, 365, 360, 430, 505, 465, 630, 497, 687, 530, 718, 565, 685, 598, 707, 632, 650, 665, 632, 700, 510, 733, 370, 800, 205, 835, 332, 868, 347, 902, 390, 935, 340, 968, 342, 1002, 440, 1036, 570, 1070, 730, 1104, 748], 1020, 470)), '#1ee63a', 2);
  line(g, P([4, 562, 15, 570, 45, 575, 80, 590, 115, 630, 150, 667, 185, 690, 215, 693, 245, 675, 280, 635, 320, 560, 350, 460, 420, 215, 452, 155, 485, 170, 520, 240, 585, 370, 650, 565, 687, 615, 720, 590, 752, 520, 790, 482, 822, 492, 890, 545, 925, 555, 957, 575, 990, 540, 1060, 408, 1090, 385, 1125, 345, 1158, 325, 1192, 347, 1260, 540, 1295, 600, 1360, 650, 1395, 675, 1428, 687, 1462, 665], 530, 470)
    .concat(P([0, 650, 25, 580, 58, 480, 92, 315, 125, 215, 195, 245, 228, 252, 260, 220, 295, 222, 330, 255, 365, 315, 430, 435, 465, 550, 497, 615, 530, 675, 565, 697, 598, 707, 632, 680, 665, 662, 700, 600, 733, 490, 800, 283, 835, 270, 868, 295, 902, 357, 935, 360, 968, 355, 1002, 385, 1036, 470, 1070, 610, 1104, 692], 1020, 470)), '#ff1010', 2);

  seg(g, 1450.500, 485, 1450.500, 728, '#666');
  for (let y = 498; y < 728; y += 11.460) seg(g, 1445, Math.round(y) + .5, 1450, Math.round(y) + .5, '#888');
  for (const y of [556, 613, 670]) seg(g, 1438, y + .5, 1450, y + .5, '#777');
})();
</script>
</body>
</html>
